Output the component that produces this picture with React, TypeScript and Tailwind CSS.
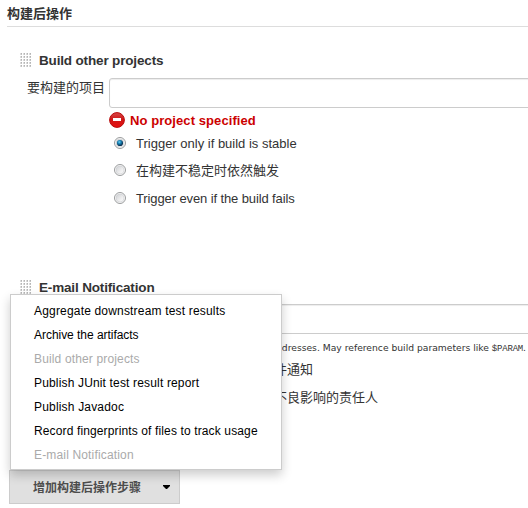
import type { ReactNode } from "react";

function DragHandle() {
  return (
    <svg width="12" height="15" viewBox="0 0 12 15" className="shrink-0" shapeRendering="crispEdges">
      {[0, 3, 6, 9, 12].map((y) =>
        [0, 3, 6, 9].map((x) => (
          <g key={`${x}-${y}`}>
            <rect x={x} y={y} width="2" height="2" fill="#dcdcdc" />
            <rect x={x + 1} y={y} width="1" height="1" fill="#b4b4b4" />
            <rect x={x + 1} y={y + 1} width="1" height="1" fill="#c4c4c4" />
          </g>
        ))
      )}
    </svg>
  );
}

function BlockTitle({ children }: { children: ReactNode }) {
  return (
    <div className="flex h-[16px] items-center pl-[20px]">
      <DragHandle />
      <span className="ml-[7px] pt-[2px] text-[13.5px] leading-[16px] font-bold tracking-[-0.16px]">{children}</span>
    </div>
  );
}

function ErrorIcon() {
  return (
    <svg width="16" height="16" viewBox="0 0 16 16" className="shrink-0">
      <defs>
        <linearGradient id="err" x1="0" y1="0" x2="0" y2="1">
          <stop offset="0" stopColor="#d94a4a" />
          <stop offset="0.45" stopColor="#cf1717" />
          <stop offset="1" stopColor="#e81010" />
        </linearGradient>
      </defs>
      <circle cx="8" cy="8" r="7.4" fill="url(#err)" stroke="#b80c0c" strokeWidth="1" />
      <rect x="4" y="6" width="8" height="3" fill="#fff" />
    </svg>
  );
}

function Radio({ checked }: { checked?: boolean }) {
  return (
    <svg width="12" height="12" viewBox="0 0 12 12" className="shrink-0">
      <defs>
        <linearGradient id="ring" x1="0" y1="0" x2="1" y2="1">
          <stop offset="0" stopColor="#cdcfd2" />
          <stop offset="0.6" stopColor="#eeeeef" />
          <stop offset="1" stopColor="#fcfcfc" />
        </linearGradient>
        <radialGradient id="dot" cx="0.4" cy="0.35" r="0.6">
          <stop offset="0" stopColor="#6fd0f3" />
          <stop offset="0.45" stopColor="#1782b5" />
          <stop offset="1" stopColor="#0b3050" />
        </radialGradient>
      </defs>
      <circle cx="6" cy="6" r="5.5" fill="#f8f8f8" stroke="#9a9c9d" />
      <circle cx="6" cy="6" r="4" fill="url(#ring)" stroke="#c6c9cc" strokeWidth="0.5" />
      {checked && <circle cx="6" cy="6" r="3.1" fill="url(#dot)" />}
    </svg>
  );
}

function Option({ checked, className, children }: { checked?: boolean; className: string; children: ReactNode }) {
  return (
    <div className={`flex items-center pl-[114px] ${className}`}>
      <Radio checked={checked} />
      <span className="ml-[10px] pt-[2px]">{children}</span>
    </div>
  );
}

function Field({ label }: { label?: string }) {
  return (
    <div className="flex h-[30px]">
      <span className="w-[109px] shrink-0 pl-[27px] leading-[20px]">{label}</span>
      <div className="h-[30px] w-[440px] shrink-0 rounded-[3px] border border-[#ccc] shadow-[inset_0_1px_1px_rgba(0,0,0,0.075)]" />
    </div>
  );
}

const menuItems = [
  { text: "Aggregate downstream test results", tracking: "tracking-[0.18px]" },
  { text: "Archive the artifacts", tracking: "tracking-[-0.04px]" },
  { text: "Build other projects", tracking: "tracking-[0.15px]", disabled: true },
  { text: "Publish JUnit test result report", tracking: "tracking-[0.16px]" },
  { text: "Publish Javadoc", tracking: "tracking-[0.18px]" },
  { text: "Record fingerprints of files to track usage", tracking: "tracking-[0.13px]" },
  { text: "E-mail Notification", tracking: "tracking-[0.16px]", disabled: true },
];

export default function App() {
  return (
    <div className="relative flex h-[508px] w-[528px] flex-col overflow-hidden bg-white font-['Liberation_Sans','Noto_Sans_CJK_SC',sans-serif] text-[13px] whitespace-nowrap text-[#333]">
      <div className="ml-[7px] h-[27px] shrink-0 border-b border-[#ddd] pt-[4px] leading-[20px] font-bold">构建后操作</div>

      <section className="mt-[25px] flex flex-col">
        <BlockTitle>Build other projects</BlockTitle>
        <div className="mt-[10px]">
          <Field label="要构建的项目" />
        </div>
        <div className="mt-[4px] flex h-[16px] items-center gap-[5px] pl-[109px] text-[13px] font-bold tracking-[0.08px] text-[#c00]">
          <ErrorIcon />
          <span className="pt-px">No project specified</span>
        </div>
        <Option checked className="mt-[5px] h-[20px]">Trigger only if build is stable</Option>
        <Option className="mt-[7px] h-[20px]">在构建不稳定时依然触发</Option>
        <Option className="mt-[8px] h-[20px] tracking-[-0.11px]">Trigger even if the build fails</Option>
      </section>

      <section className="mt-[71px] flex flex-col">
        <BlockTitle>E-mail Notification</BlockTitle>
        <div className="mt-[9px]">
          <Field />
        </div>
        <div className="mt-[6px] flex h-[16px] items-center justify-end pr-[2px] font-['DejaVu_Sans',sans-serif] text-[9.2px]">
          Whitespace-separated list of recipient addresses. May reference build parameters like&nbsp;
          <code className="pt-[3px] font-['Liberation_Mono',monospace] text-[9px] tracking-[-0.2px]">$PARAM</code>.
        </div>
        <div className="mt-[4px] h-[20px] pl-[118px] leading-[20px]">每次不稳定的构建都发送邮件通知</div>
        <div className="mt-[8px] h-[20px] pl-[118px] leading-[20px]">单独发送邮件给对构建造成不良影响的责任人</div>
      </section>

      <button className="mt-[62px] ml-[9px] flex h-[34px] w-[171px] shrink-0 items-center border border-[#ccc] bg-[#e0e0e0] pl-[23px] text-[12px] font-bold text-[#4d4d4d]">
        <span className="pt-[2px]">增加构建后操作步骤</span>
        <svg width="7" height="4" viewBox="0 0 7 4" className="ml-[22px]">
          <path d="M0 0H7V1L4 4H3L0 1Z" fill="#000" />
        </svg>
      </button>

      <ul className="absolute top-[294px] left-[10px] flex h-[176px] w-[272px] flex-col border border-[#ccc] bg-white pt-[4px] text-[12px] leading-[24px] text-black shadow-[0_5px_10px_rgba(0,0,0,0.2)]">
        {menuItems.map((item) => (
          <li key={item.text} className={`h-[24px] pl-[23px] ${item.tracking} ${item.disabled ? "text-[#aaa]" : ""}`}>
            {item.text}
          </li>
        ))}
      </ul>
    </div>
  );
}
